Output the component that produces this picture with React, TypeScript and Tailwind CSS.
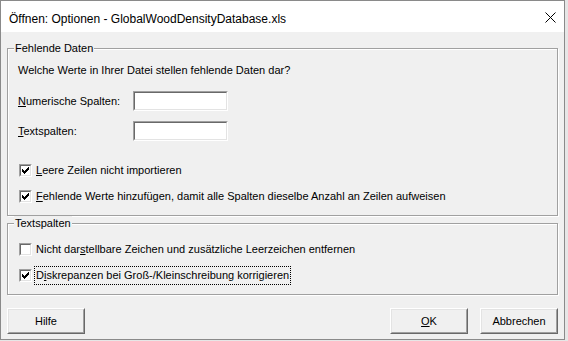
import React from "react";

const Check = () => (
  <svg width="7" height="7" viewBox="0 0 7 7" shapeRendering="crispEdges" className="block">
    <rect x="0" y="2" width="1" height="3" fill="#000" />
    <rect x="1" y="3" width="1" height="3" fill="#000" />
    <rect x="2" y="4" width="1" height="3" fill="#000" />
    <rect x="3" y="3" width="1" height="3" fill="#000" />
    <rect x="4" y="2" width="1" height="3" fill="#000" />
    <rect x="5" y="1" width="1" height="3" fill="#000" />
    <rect x="6" y="0" width="1" height="3" fill="#000" />
  </svg>
);

const Box = ({ checked }: { checked: boolean }) => (
  <div className="w-[13px] h-[13px] shrink-0 border border-t-[#a0a0a0] border-l-[#a0a0a0] border-b-white border-r-white">
    <div className="w-full h-full border border-t-[#696969] border-l-[#696969] border-b-[#e3e3e3] border-r-[#e3e3e3] bg-white flex items-center justify-center">
      {checked && <Check />}
    </div>
  </div>
);

const Field = () => (
  <div className="w-[95px] h-[20px] border border-t-[#a0a0a0] border-l-[#a0a0a0] border-b-white border-r-white">
    <div className="w-full h-full border border-t-[#696969] border-l-[#696969] border-b-[#e3e3e3] border-r-[#e3e3e3] bg-white" />
  </div>
);

const CheckRow = ({
  checked,
  children,
  focus,
}: {
  checked: boolean;
  children: React.ReactNode;
  focus?: boolean;
}) => (
  <div className="flex items-center h-[13px] pl-[11px]">
    <Box checked={checked} />
    <span
      className={
        "ml-[3px] leading-[17px] px-[1px] " +
        (focus ? "outline outline-1 outline-dotted outline-black" : "")
      }
    >
      {children}
    </span>
  </div>
);

const Btn = ({ children }: { children: React.ReactNode }) => (
  <div className="w-[78px] h-[26px] border border-t-white border-l-white border-b-[#696969] border-r-[#696969]">
    <div className="w-full h-full border border-t-[#e3e3e3] border-l-[#e3e3e3] border-b-[#a0a0a0] border-r-[#a0a0a0] bg-[#f0f0f0] flex items-center justify-center text-black">
      {children}
    </div>
  </div>
);

const Group = ({
  label,
  className,
  children,
}: {
  label: string;
  className: string;
  children: React.ReactNode;
}) => (
  <div
    className={
      "relative border border-[#a0a0a0] shadow-[inset_1px_1px_0_#ffffff,1px_1px_0_#ffffff] " +
      className
    }
  >
    <span className="absolute left-[6px] top-[-8px] bg-[#f0f0f0] px-[1px] leading-[14px]">
      {label}
    </span>
    {children}
  </div>
);

export default function App() {
  return (
    <div
      className="w-[568px] h-[341px] bg-[#e6e6e6] overflow-hidden text-[11px] text-black"
      style={{ fontFamily: '"Liberation Sans", Arial, sans-serif' }}
    >
      <div className="w-[565px] h-[340px] border border-[#8a8a8a] bg-[#f0f0f0] flex flex-col">
        <div className="h-[31px] bg-white flex items-center justify-between shrink-0">
          <span className="pl-[8px] text-[12px] pt-[4px]">
            Öffnen: Optionen - GlobalWoodDensityDatabase.xls
          </span>
          <svg width="11" height="11" viewBox="0 0 11 11" className="mr-[8px] mt-[2px]">
            <path d="M0.5 0.5 L10.5 10.5 M10.5 0.5 L0.5 10.5" stroke="#000" strokeWidth="1" />
          </svg>
        </div>

        <div className="flex flex-col px-[6px] pt-[16px]">
          <Group label="Fehlende Daten" className="pt-[15px] pb-[12px]">
            <div className="pl-[10px] leading-[13px]">
              Welche Werte in Ihrer Datei stellen fehlende Daten dar?
            </div>
            <div className="flex items-center mt-[14px] pl-[10px]">
              <span className="w-[115px]">
                <u>N</u>umerische Spalten:
              </span>
              <Field />
            </div>
            <div className="flex items-center mt-[10px] pl-[10px]">
              <span className="w-[115px]">
                <u>T</u>extspalten:
              </span>
              <Field />
            </div>
            <div className="mt-[23px]">
              <CheckRow checked>
                <u>L</u>eere Zeilen nicht importieren
              </CheckRow>
            </div>
            <div className="mt-[13px]">
              <CheckRow checked>
                <u>F</u>ehlende Werte hinzufügen, damit alle Spalten dieselbe Anzahl an Zeilen aufweisen
              </CheckRow>
            </div>
          </Group>

          <Group label="Textspalten" className="mt-[7px] pt-[19px] pb-[12px]">
            <CheckRow checked={false}>
              Nicht dar<u>s</u>tellbare Zeichen und zusätzliche Leerzeichen entfernen
            </CheckRow>
            <div className="mt-[13px]">
              <CheckRow checked focus>
                D<u>i</u>skrepanzen bei Groß-/Kleinschreibung korrigieren
              </CheckRow>
            </div>
          </Group>

          <div className="flex items-center mt-[13px]">
            <Btn>Hilfe</Btn>
            <div className="flex-1" />
            <Btn>
              <span>
                <u>O</u>K
              </span>
            </Btn>
            <div className="w-[12px]" />
            <Btn>Abbrechen</Btn>
          </div>
        </div>
      </div>
    </div>
  );
}
